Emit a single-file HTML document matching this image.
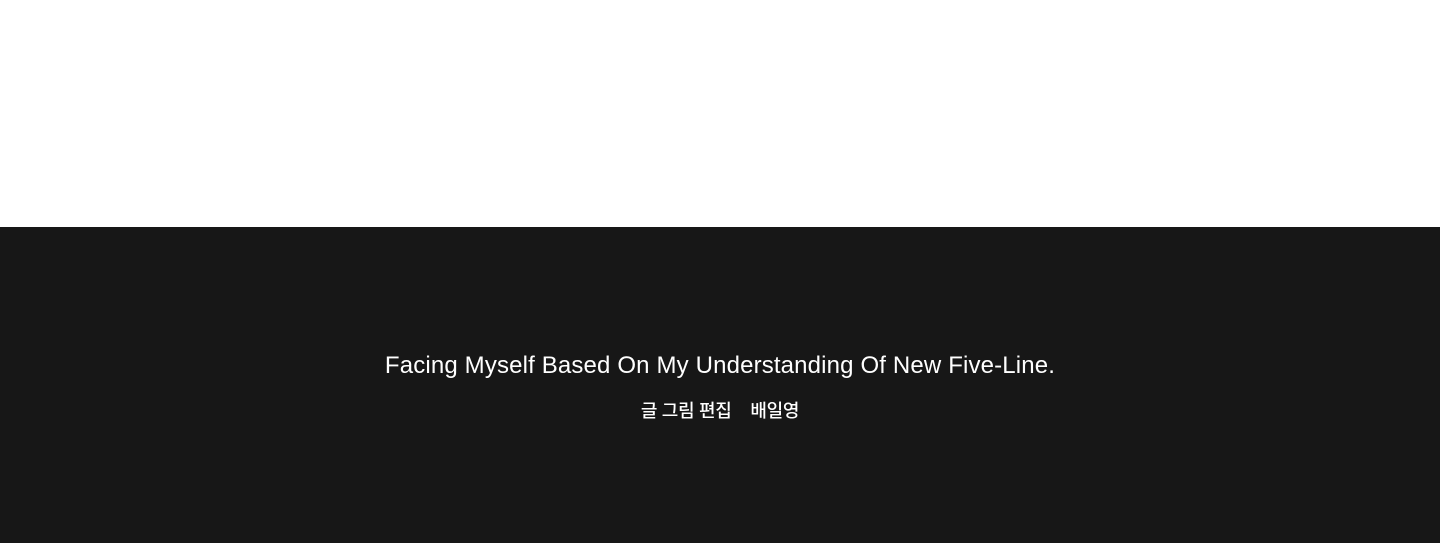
<!DOCTYPE html>
<html><head><meta charset="utf-8"><style>
html,body{margin:0;padding:0;width:1440px;height:543px;overflow:hidden;background:#fff;font-family:"Liberation Sans","Noto Sans CJK KR",sans-serif}
.dark{position:absolute;top:227px;left:0;width:1440px;height:316px;background:#171717;color:#fff;text-align:center}
.t{position:absolute;top:123px;left:0;width:100%;font-size:24px;letter-spacing:0.15px;line-height:32px}
.s{position:absolute;top:172px;left:0;width:100%;font-size:18px;line-height:24px;letter-spacing:-0.3px;font-weight:500}
</style></head><body>
<div class="dark">
<div class="t">Facing Myself Based On My Understanding Of New Five-Line.</div>
<div class="s">글 그림 편집&nbsp;&nbsp;&nbsp; 배일영</div>
</div>
</body></html>
